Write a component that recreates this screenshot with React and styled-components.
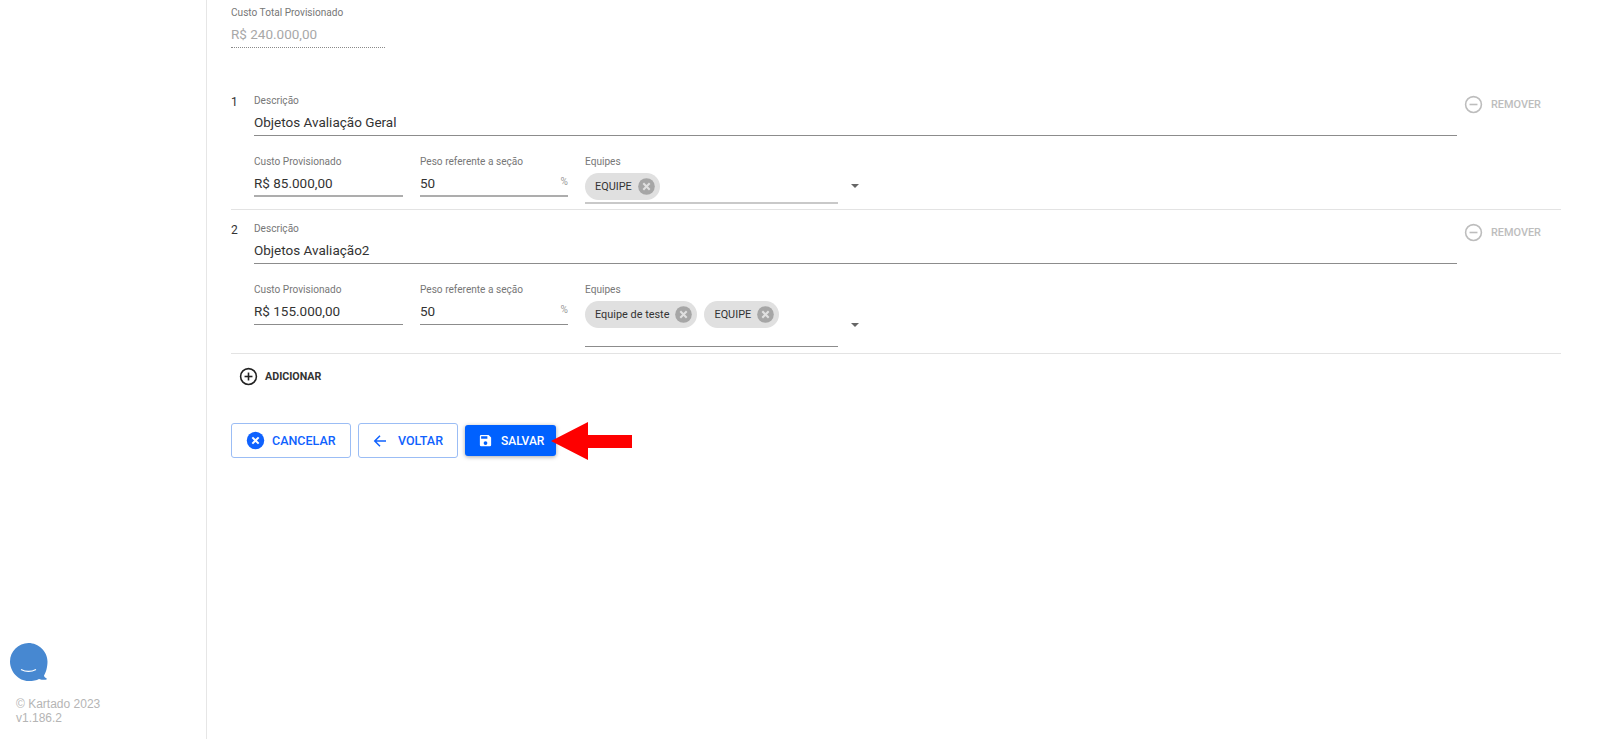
import React from "react";
import styled, { createGlobalStyle } from "styled-components";

const Global = createGlobalStyle`
  html, body { margin: 0; padding: 0; background: #fff; }
  body { font-family: Roboto, "Liberation Sans", sans-serif; overflow: hidden; }
`;

const Page = styled.div`
  display: flex;
  height: 739px;
  width: 1601px;
  overflow: hidden;
`;

const Sidebar = styled.aside`
  width: 207px;
  flex: none;
  box-sizing: border-box;
  border-right: 1px solid #e6e6e6;
  display: flex;
  flex-direction: column;
  justify-content: flex-end;
  padding: 0 0 14px 9px;
`;

const Copyright = styled.div`
  margin: 16px 0 0 7px;
  font-family: "Liberation Sans", Arial, sans-serif;
  font-size: 12px;
  line-height: 13.5px;
  color: #b5b5b5;
`;

const Main = styled.main`
  flex: 1;
  padding: 0 40px 0 24px;
  min-width: 0;
`;

const TotalField = styled.div`
  width: 154px;
  padding-top: 7px;
  height: 40px;
  border-bottom: 1px dotted #8a8a8a;
`;

const Label = styled.div`
  font-size: 10.1px;
  line-height: 12px;
  color: #777;
`;

const TotalValue = styled.div`
  margin-top: 5px;
  font-size: 13.5px;
  line-height: 20px;
  color: #a8a8a8;
`;

const Row = styled.section`
  display: grid;
  grid-template-columns: 23px 1203px 1fr;
  padding-top: ${(p) => p.$top}px;
  padding-bottom: ${(p) => p.$bottom}px;
  border-bottom: 1px solid #e3e3e3;
`;

const Index = styled.div`
  font-size: 12px;
  line-height: 14px;
  color: #333;
`;

const Fields = styled.div`
  display: flex;
  flex-direction: column;
`;

const Field = styled.div`
  box-sizing: border-box;
  width: ${(p) => (p.$width ? `${p.$width}px` : "100%")};
  height: 41px;
  border-bottom: ${(p) => p.$weight || 1}px solid ${(p) => p.$line || "#8c8c8c"};
  position: relative;
`;

const Value = styled.div`
  margin-top: 5px;
  font-size: 13.5px;
  line-height: 20px;
  color: #333;
`;

const FieldLine = styled.div`
  display: flex;
  gap: 17px;
  margin-top: 20px;
  align-items: flex-start;
`;

const Suffix = styled.span`
  position: absolute;
  right: 0;
  top: 20px;
  font-size: 10.1px;
  color: #999;
`;

const SelectWrap = styled.div`
  display: flex;
  align-items: center;
  gap: 13px;
`;

const SelectField = styled.div`
  box-sizing: border-box;
  width: 253px;
  height: ${(p) => p.$height}px;
  border-bottom: ${(p) => p.$weight}px solid ${(p) => p.$line};
`;

const Chips = styled.div`
  display: flex;
  gap: 7px;
  margin-top: 5px;
`;

const Chip = styled.div`
  display: flex;
  align-items: center;
  height: 27px;
  box-sizing: border-box;
  border-radius: 14px;
  background: #e0e0e0;
  padding: 0 5px 0 10px;
  gap: 6px;
  font-size: 10.9px;
  color: #333;
`;

const Caret = styled.span`
  width: 0;
  height: 0;
  border-left: 4.5px solid transparent;
  border-right: 4.5px solid transparent;
  border-top: 4.5px solid #666;
  margin-top: ${(p) => p.$top}px;
`;

const Remove = styled.button`
  all: unset;
  display: flex;
  align-items: center;
  align-self: flex-start;
  gap: 8px;
  margin: 0 0 0 7px;
  font-size: 10.9px;
  font-weight: 500;
  color: #bdbdbd;
`;

const Add = styled.button`
  all: unset;
  display: flex;
  align-items: center;
  gap: 7px;
  margin: 13px 0 0 8px;
  font-size: 10.7px;
  font-weight: 700;
  color: #333;
`;

const Actions = styled.div`
  display: flex;
  align-items: center;
  gap: 7px;
  margin-top: 37px;
  position: relative;
`;

const Button = styled.button`
  all: unset;
  box-sizing: border-box;
  display: flex;
  align-items: center;
  gap: ${(p) => p.$gap}px;
  padding-left: ${(p) => p.$pad}px;
  width: ${(p) => p.$width}px;
  height: ${(p) => (p.$solid ? 31 : 35)}px;
  border-radius: 3px;
  font-size: ${(p) => (p.$solid ? 12 : 12.5)}px;
  font-weight: 500;
  color: ${(p) => (p.$solid ? "#fff" : "#0f62fe")};
  background: ${(p) => (p.$solid ? "#0061ff" : "#fff")};
  border: ${(p) => (p.$solid ? "none" : "1px solid #9bbdf5")};
  box-shadow: ${(p) => (p.$solid ? "0 1px 4px rgba(0,0,0,.35)" : "none")};
`;

const Arrow = styled.svg`
  position: absolute;
  left: 320px;
  top: -1px;
`;

const CircleIcon = ({ kind, color, size = 19 }) => (
  <svg width={size} height={size} viewBox="0 0 24 24" fill="none" stroke={color} strokeWidth="2">
    <circle cx="12" cy="12" r="10" />
    <path d="M7 12h10" />
    {kind === "plus" && <path d="M12 7v10" />}
  </svg>
);

const ChipClose = () => (
  <svg width="17" height="17" viewBox="0 0 18 18">
    <circle cx="9" cy="9" r="8.8" fill="#a6a6a6" />
    <path d="M5.6 5.6l6.8 6.8M12.4 5.6l-6.8 6.8" stroke="#e0e0e0" strokeWidth="2.2" />
  </svg>
);

const Logo = () => (
  <svg width="40" height="40" viewBox="0 0 40 40">
    <path
      d="M19.5 1C9.5 1 1 9.3 1 19.5S9.5 39 19.5 39c4.5 0 8-.6 10.5-2.1 3 1 6 1.3 7.500.5.6-.4.3-.9-.2-1.100-1.100-.4-2.100-1.500-2.300-2.800C37 30.500 38.500 25 38.500 19.500 38.500 9.300 29.500 1 19.500 1z"
      fill="#4788d1"
    />
    <path d="M12 27.500c4.500 2.300 10.500 2.300 15 0" stroke="#fff" strokeWidth="1.400" fill="none" />
  </svg>
);

const rows = [
  {
    n: 1, top: 47, bottom: 5, desc: "Objetos Avaliação Geral", cost: "R$ 85.000,00",
    teams: ["EQUIPE"], selectH: 48, selectLine: "#c9c9c9", selectWeight: 2,
    fieldLine: "#adadad", fieldWeight: 2, caret: 12,
  },
  {
    n: 2, top: 13, bottom: 6, desc: "Objetos Avaliação2", cost: "R$ 155.000,00",
    teams: ["Equipe de teste", "EQUIPE"], selectH: 63, selectLine: "#8c8c8c", selectWeight: 1,
    fieldLine: "#8c8c8c", fieldWeight: 1, caret: 18,
  },
];

export default function App() {
  return (
    <Page>
      <Global />
      <Sidebar>
        <Logo />
        <Copyright>
          © Kartado 2023
          <br />
          v1.186.2
        </Copyright>
      </Sidebar>
      <Main>
        <TotalField>
          <Label>Custo Total Provisionado</Label>
          <TotalValue>R$ 240.000,00</TotalValue>
        </TotalField>
        {rows.map((r) => (
          <Row key={r.n} $top={r.top} $bottom={r.bottom}>
            <Index>{r.n}</Index>
            <Fields>
              <Field>
                <Label>Descrição</Label>
                <Value>{r.desc}</Value>
              </Field>
              <FieldLine>
                <Field $width={149} $line={r.fieldLine} $weight={r.fieldWeight}>
                  <Label>Custo Provisionado</Label>
                  <Value>{r.cost}</Value>
                </Field>
                <Field $width={148} $line={r.fieldLine} $weight={r.fieldWeight}>
                  <Label>Peso referente a seção</Label>
                  <Value>50</Value>
                  <Suffix>%</Suffix>
                </Field>
                <SelectWrap>
                  <SelectField $height={r.selectH} $line={r.selectLine} $weight={r.selectWeight}>
                    <Label>Equipes</Label>
                    <Chips>
                      {r.teams.map((t) => (
                        <Chip key={t}>
                          {t}
                          <ChipClose />
                        </Chip>
                      ))}
                    </Chips>
                  </SelectField>
                  <Caret $top={r.caret} />
                </SelectWrap>
              </FieldLine>
            </Fields>
            <Remove>
              <CircleIcon kind="minus" color="#bdbdbd" />
              REMOVER
            </Remove>
          </Row>
        ))}
        <Add>
          <CircleIcon kind="plus" color="#222" />
          ADICIONAR
        </Add>
        <Actions>
          <Button $width={120} $gap={7} $pad={14}>
            <svg width="19" height="19" viewBox="0 0 24 24">
              <circle cx="12" cy="12" r="11" fill="#0f62fe" />
              <path d="M8 8l8 8M16 8l-8 8" stroke="#fff" strokeWidth="2.5" />
            </svg>
            CANCELAR
          </Button>
          <Button $width={100} $gap={9} $pad={12}>
            <svg width="18" height="18" viewBox="0 0 24 24" fill="none" stroke="#0f62fe" strokeWidth="2">
              <path d="M20 12H5M12 5l-7 7 7 7" />
            </svg>
            VOLTAR
          </Button>
          <Button $solid $width={91} $gap={8} $pad={13}>
            <svg width="15" height="15" viewBox="0 0 24 24" fill="#fff">
              <path d="M17 3H5a2 2 0 0 0-2 2v14a2 2 0 0 0 2 2h14a2 2 0 0 0 2-2V7l-4-4zm-5 16a3 3 0 1 1 0-6 3 3 0 0 1 0 6zm3-10H5V5h10v4z" />
            </svg>
            SALVAR
          </Button>
          <Arrow width="81" height="38" viewBox="0 0 81 38">
            <polygon points="0,19 37,0 37,13 81,13 81,26 37,26 37,38" fill="#fe0000" />
          </Arrow>
        </Actions>
      </Main>
    </Page>
  );
}
